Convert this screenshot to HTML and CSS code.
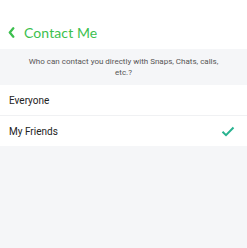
FILE: index.html
```html
<!DOCTYPE html>
<html>
<head>
<meta charset="utf-8">
<link rel="stylesheet" href="styles.css">
</head>
<body>
<div class="header">
  <svg class="back" width="7" height="11" viewBox="0 0 7 11"><path d="M5.3 1.3 L1.8 5.5 L5.3 9.7" fill="none" stroke="#3cbf4e" stroke-width="2.3" stroke-linecap="round" stroke-linejoin="round"/></svg>
  <span class="title">Contact Me</span>
</div>
<div class="desc">Who can contact you directly with Snaps, Chats, calls,<br>etc.?</div>
<div class="list">
  <div class="row">Everyone</div>
  <div class="row">My Friends
    <svg class="check" width="14" height="11" viewBox="0 0 14 11"><path d="M1.5 5.8 L5 9.2 L12.5 1.5" fill="none" stroke="#27b28f" stroke-width="2"/></svg>
  </div>
</div>
</body>
</html>
```
FILE: styles.css
```css
html, body { margin: 0; padding: 0; }
body {
  background: #f5f6f8;
  font-family: Roboto, "Noto Sans", sans-serif;
  width: 247px;
  height: 248px;
}
.header {
  background: #fff;
  height: 49px;
  display: flex;
  align-items: center;
  padding: 17px 0 0 8px;
  box-sizing: border-box;
  gap: 9px;
}
.back { margin-top: -1px; }
.title {
  color: #3cbf4e;
  font-family: Lato, sans-serif;
  font-size: 14px;
  line-height: 18px;
  letter-spacing: 0.1px;
}
.desc {
  text-align: center;
  font-size: 8px;
  line-height: 10.5px;
  color: #555;
  padding: 8px 10px 7px;
  height: 36px;
  box-sizing: border-box;
}
.list { background: #fff; }
.row {
  height: 30px;
  box-sizing: border-box;
  display: flex;
  align-items: center;
  justify-content: space-between;
  padding: 1px 12px 0 9px;
  font-size: 10px;
  color: #222;
}
.row + .row { border-top: 1px solid #f0f1f3; height: 31px; }
```
